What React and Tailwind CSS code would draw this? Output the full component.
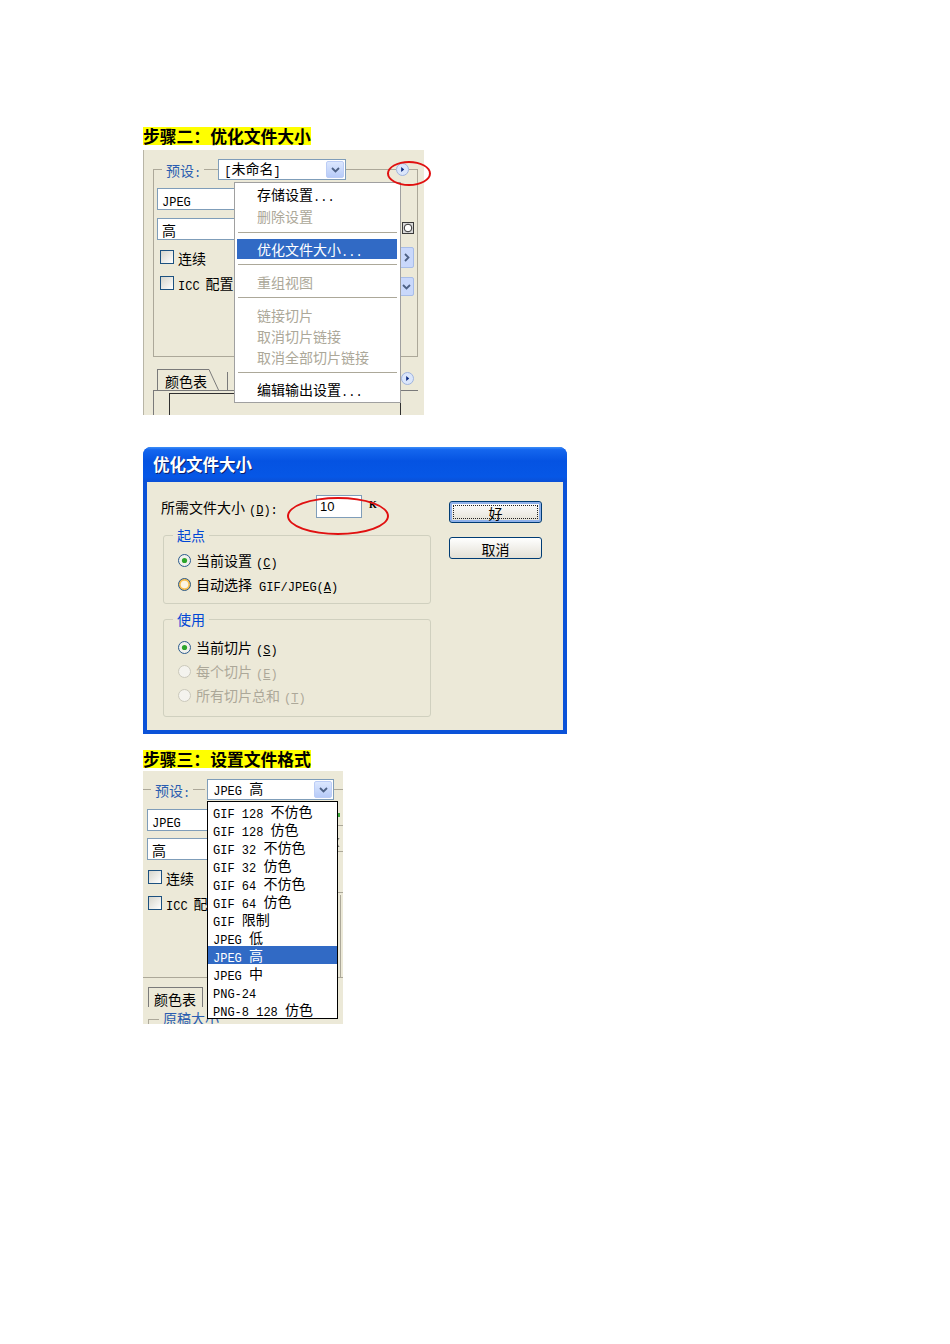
import React from "react";

const MONO = "relative top-[1px] font-['Liberation_Mono','Noto_Sans_CJK_SC',monospace] text-[12px]";
const CJK = "font-['Noto_Sans_CJK_SC',sans-serif] text-[14px]";

function T({ s }) {
  const parts = s.match(/[\x00-\x7f]+|[^\x00-\x7f]+/g) || [];
  return (
    <>
      {parts.map((p, i) =>
        /^[\x00-\x7f]+$/.test(p) ? (
          <span key={i} className={MONO}>
            {p}
          </span>
        ) : (
          <span key={i} className={CJK}>
            {p}
          </span>
        )
      )}
    </>
  );
}

function U({ k, post = ")" }) {
  return (
    <span className={MONO}>
      (<u>{k}</u>
      {post}
    </span>
  );
}

function Heading({ children }) {
  return (
    <div className="h-[18px] whitespace-nowrap bg-[#ffff00] font-['Noto_Sans_CJK_SC',sans-serif] text-[16.8px] font-bold leading-[18px] text-black">
      {children}
    </div>
  );
}

function Chevron() {
  return (
    <svg width="9" height="6" viewBox="0 0 9 6">
      <path d="M1 1L4.5 4.5L8 1" fill="none" stroke="#4d6185" strokeWidth="1.8" />
    </svg>
  );
}

function ChevronRight() {
  return (
    <svg width="6" height="9" viewBox="0 0 6 9">
      <path d="M1 1L4.5 4.5L1 8" fill="none" stroke="#4d6185" strokeWidth="1.8" />
    </svg>
  );
}

function Combo({ w, children }) {
  return (
    <div className={`flex h-[21px] shrink-0 items-center border border-[#7f9db9] bg-white ${w}`}>
      <div className="flex-1 whitespace-pre pl-[5px] leading-[19px]">{children}</div>
      <div className="mr-[1px] flex h-[17px] w-[18px] items-center justify-center rounded-[2px] border border-[#bccdf6] bg-gradient-to-b from-[#dce7fe] to-[#b7cbf8]">
        <Chevron />
      </div>
    </div>
  );
}

function MenuCircle() {
  return (
    <svg width="13" height="13" viewBox="0 0 13 13" className="shrink-0">
      <circle cx="6.5" cy="6.5" r="6" fill="#dbe6fb" stroke="#9fb3dd" />
      <path d="M5.2 4L8.2 6.5L5.2 9Z" fill="#0b2a80" />
    </svg>
  );
}

function Check() {
  return <div className="h-[14px] w-[14px] shrink-0 border border-[#1c5180] bg-gradient-to-br from-[#d6d5cc] to-white" />;
}

function Radio({ kind }) {
  if (kind === "on")
    return (
      <svg width="13" height="13" viewBox="0 0 13 13" className="shrink-0">
        <circle cx="6.5" cy="6.5" r="6" fill="#f1f1ec" stroke="#2a5a8c" />
        <circle cx="6.5" cy="6.5" r="2.6" fill="#2ca52c" />
      </svg>
    );
  if (kind === "hover")
    return (
      <svg width="13" height="13" viewBox="0 0 13 13" className="shrink-0">
        <circle cx="6.5" cy="6.5" r="6" fill="#f9bf4f" stroke="#2a5a8c" />
        <circle cx="6.5" cy="6.5" r="3.8" fill="#fbf4e2" />
      </svg>
    );
  return (
    <svg width="13" height="13" viewBox="0 0 13 13" className="shrink-0">
      <circle cx="6.5" cy="6.5" r="6" fill="#f4f3ee" stroke="#cac8bb" />
    </svg>
  );
}

function Field({ w, children }) {
  return (
    <div className={`flex h-[22px] shrink-0 items-center whitespace-pre border border-[#7f9db9] bg-white pl-[4px] leading-none ${w}`}>
      <span>{children}</span>
    </div>
  );
}

function MenuItem({ children, dis, hl }) {
  const cls = hl
    ? "flex h-[20px] items-center whitespace-pre bg-[#316ac5] pl-[20px] leading-none text-white"
    : dis
    ? "flex h-[21px] items-center whitespace-pre pl-[20px] leading-none text-[#aca899]"
    : "flex h-[21px] items-center whitespace-pre pl-[20px] leading-none text-black";
  return (
    <div className={cls}>
      <span>{children}</span>
    </div>
  );
}

function Sep({ h }) {
  return (
    <div className={`flex items-center pl-[1px] ${h}`}>
      <div className="h-px flex-1 bg-[#aca899]" />
    </div>
  );
}

function Panel1() {
  return (
    <div className="relative">
      <div className="relative h-[265px] w-[281px] overflow-hidden border-l border-[#b8b5a6] bg-[#ece9d8] pl-[9px] pt-[9px]">
        <div className="w-[265px]">
          <div className="flex h-[21px] items-center">
            <div className="h-[11px] w-[9px] self-end border-l border-t border-[#aca899]" />
            <span className="whitespace-pre pl-[4px] pr-[3px] leading-none text-[#2a5db0]">
              <T s="预设:" />
            </span>
            <div className="h-px w-[14px] bg-[#aca899]" />
            <Combo w="w-[128px]">
              <T s="[未命名]" />
            </Combo>
            <div className="h-px flex-1 bg-[#aca899]" />
            <MenuCircle />
            <div className="h-[11px] w-[9px] self-end border-r border-t border-[#aca899]" />
          </div>
          <div className="flex h-[177px] justify-between border-x border-b border-[#aca899] pl-[3px] pr-[3px] pt-[8px]">
            <div className="flex flex-col">
              <Field w="w-[90px]">
                <T s="JPEG" />
              </Field>
              <div className="mt-[8px]">
                <Field w="w-[90px]">
                  <T s="高" />
                </Field>
              </div>
              <div className="mt-[9px] flex h-[16px] items-center gap-[4px] whitespace-pre pl-[3px] leading-none">
                <Check />
                <span>
                  <T s="连续" />
                </span>
              </div>
              <div className="mt-[10px] flex h-[16px] items-center gap-[4px] whitespace-pre pl-[3px] leading-none">
                <Check />
                <span>
                  <T s="ICC" />
                  <span className="inline-block w-[6px]" />
                  <T s="配置" />
                </span>
              </div>
            </div>
            <div className="flex flex-col items-end">
              <svg width="12" height="12" viewBox="0 0 12 12" className="mt-[34px]">
                <rect x="0" y="0" width="12" height="12" fill="#3a3a3a" />
                <rect x="1" y="1" width="10" height="10" fill="#d8d8d8" />
                <circle cx="6" cy="6" r="3.8" fill="#fff" stroke="#333" strokeWidth="1" />
              </svg>
              <div className="mt-[13px] flex h-[21px] w-[22px] items-center justify-end rounded-[2px] border border-[#a8bde8] bg-[#c9d8fb] pr-[3px]">
                <ChevronRight />
              </div>
              <div className="mt-[9px] flex h-[19px] w-[22px] items-center justify-end rounded-[2px] border border-[#a8bde8] bg-[#c9d8fb] pr-[2px]">
                <Chevron />
              </div>
            </div>
          </div>
        </div>
        <div className="mt-[11px] w-[265px]">
          <div className="flex h-[22px] items-end">
            <div className="ml-[4px] flex h-[21px] items-center whitespace-pre border-l border-t border-[#7a7a7a] pl-[7px] pr-[2px] leading-none">
              <span>
                <T s="颜色表" />
              </span>
            </div>
            <svg width="10" height="21" viewBox="0 0 10 21" className="shrink-0">
              <path d="M0 0.5L9.5 21" stroke="#7a7a7a" fill="none" />
            </svg>
            <div className="ml-[8px] h-[18px] border-l border-[#7a7a7a]" />
            <div className="flex-1" />
            <div className="mb-[5px] mr-[4px]">
              <MenuCircle />
            </div>
          </div>
          <div className="h-[30px] border-l border-t border-[#7a7a7a] pl-[15px] pt-[2px]">
            <div className="h-full w-[232px] border border-[#303030]" />
          </div>
        </div>

        <div className="absolute left-[90px] top-[32px] w-[167px] border border-[#a0a0a0] bg-white pb-[3px] pl-[2px] pr-[3px]">
          <MenuItem>
            <T s="存储设置..." />
          </MenuItem>
          <MenuItem dis>
            <T s="删除设置" />
          </MenuItem>
          <Sep h="h-[14px]" />
          <MenuItem hl>
            <T s="优化文件大小..." />
          </MenuItem>
          <Sep h="h-[11px]" />
          <MenuItem dis>
            <T s="重组视图" />
          </MenuItem>
          <Sep h="h-[12px]" />
          <MenuItem dis>
            <T s="链接切片" />
          </MenuItem>
          <MenuItem dis>
            <T s="取消切片链接" />
          </MenuItem>
          <MenuItem dis>
            <T s="取消全部切片链接" />
          </MenuItem>
          <Sep h="h-[12px]" />
          <MenuItem>
            <T s="编辑输出设置..." />
          </MenuItem>
        </div>
      </div>
      <div className="absolute left-[244px] top-[11px] h-[25px] w-[44px] rounded-[50%] border-2 border-[#e01010]" />
    </div>
  );
}

function XPButton({ children, def }) {
  if (def)
    return (
      <div className="flex h-[22px] w-[93px] rounded-[3px] border border-[#003c74] bg-gradient-to-b from-white to-[#e3e0d5] p-[1px] shadow-[inset_0_0_0_2px_#8fb1ea]">
        <div className="m-[2px] flex flex-1 items-center justify-center border border-dotted border-[#222] leading-none">
          <span>
            <T s="好" />
          </span>
        </div>
      </div>
    );
  return (
    <div className="flex h-[22px] w-[93px] items-center justify-center rounded-[3px] border border-[#003c74] bg-gradient-to-b from-white to-[#e3e0d5] leading-none">
      <span>{children}</span>
    </div>
  );
}

function RadioRow({ kind, children, h }) {
  return (
    <div className={`flex items-center gap-[5px] whitespace-pre leading-none ${h} ${kind === "off" ? "text-[#aca899]" : "text-black"}`}>
      <Radio kind={kind} />
      <span>{children}</span>
    </div>
  );
}

function Dialog() {
  return (
    <div className="relative">
      <div className="flex h-[287px] w-[424px] flex-col overflow-hidden rounded-t-[8px] bg-[#0b52d8]">
        <div className="flex h-[35px] shrink-0 items-center bg-[linear-gradient(to_bottom,#3c8ef8_0%,#1466ee_8%,#0553e2_40%,#0657e6_85%,#0a4fd6_100%)] pl-[10px]">
          <span className="font-['Noto_Sans_CJK_SC',sans-serif] text-[16.5px] font-bold leading-none text-white [text-shadow:1px_1px_0_#0a1f6e]">
            优化文件大小
          </span>
        </div>
        <div className="mx-[4px] mb-[4px] flex flex-1 bg-[#ece9d8]">
          <div className="ml-[16px] flex w-[268px] flex-col">
            <div className="-ml-[2px] mt-[13px] flex h-[23px] items-center">
              <span className="w-[155px] whitespace-pre leading-none">
                <T s="所需文件大小" />
                <span className="inline-block w-[4px]" />
                <U k="D" post="):" />
              </span>
              <div className="flex h-[23px] w-[46px] items-center border border-[#7f9db9] bg-white pl-[3px] font-['Liberation_Sans',sans-serif] text-[13px] leading-none">
                10
              </div>
              <span className="ml-[7px] self-start pt-[5px] font-['Liberation_Serif',serif] text-[10px] font-bold leading-none">K</span>
            </div>
            <fieldset className="mt-[8px] rounded-[3px] border border-[#d0d0bf]">
              <legend className="ml-[9px] px-[4px] font-['Noto_Sans_CJK_SC',sans-serif] text-[14px] leading-[18px] text-[#0046d5]">起点</legend>
              <div className="pb-[7px] pl-[14px] pt-[4px]">
                <RadioRow kind="on" h="h-[24px]">
                  <T s="当前设置" />
                  <span className="inline-block w-[4px]" />
                  <U k="C" />
                </RadioRow>
                <RadioRow kind="hover" h="h-[24px]">
                  <T s="自动选择" />
                  <span className="inline-block w-[7px]" />
                  <T s="GIF/JPEG" />
                  <U k="A" />
                </RadioRow>
              </div>
            </fieldset>
            <fieldset className="mt-[6px] rounded-[3px] border border-[#d0d0bf]">
              <legend className="ml-[9px] px-[4px] font-['Noto_Sans_CJK_SC',sans-serif] text-[14px] leading-[18px] text-[#0046d5]">使用</legend>
              <div className="pb-[9px] pl-[14px] pt-[7px]">
                <RadioRow kind="on" h="h-[24px]">
                  <T s="当前切片" />
                  <span className="inline-block w-[4px]" />
                  <U k="S" />
                </RadioRow>
                <RadioRow kind="off" h="h-[24px]">
                  <T s="每个切片" />
                  <span className="inline-block w-[4px]" />
                  <U k="E" />
                </RadioRow>
                <RadioRow kind="off" h="h-[24px]">
                  <T s="所有切片总和" />
                  <span className="inline-block w-[4px]" />
                  <U k="T" />
                </RadioRow>
              </div>
            </fieldset>
          </div>
          <div className="ml-[18px] flex flex-col pt-[19px]">
            <XPButton def />
            <div className="mt-[14px]">
              <XPButton>
                <T s="取消" />
              </XPButton>
            </div>
          </div>
        </div>
      </div>
      <div className="absolute left-[144px] top-[50px] h-[38px] w-[102px] rounded-[50%] border-2 border-[#e01010]" />
    </div>
  );
}

const LIST = [
  "GIF 128 不仿色",
  "GIF 128 仿色",
  "GIF 32 不仿色",
  "GIF 32 仿色",
  "GIF 64 不仿色",
  "GIF 64 仿色",
  "GIF 限制",
  "JPEG 低",
  "JPEG 高",
  "JPEG 中",
  "PNG-24",
  "PNG-8 128 仿色",
];

function Panel3() {
  return (
    <div className="relative h-[253px] w-[200px] overflow-hidden bg-[#ece9d8] pt-[8px]">
      <div className="flex h-[21px] items-center">
        <div className="h-px w-[8px] bg-[#aca899]" />
        <span className="whitespace-pre pl-[4px] pr-[3px] leading-none text-[#2a5db0]">
          <T s="预设:" />
        </span>
        <div className="h-px w-[12px] bg-[#aca899]" />
        <div className="w-[2px]" />
        <Combo w="w-[127px]">
          <T s="JPEG 高" />
        </Combo>
        <div className="h-px flex-1 bg-[#aca899]" />
      </div>
      <div className="flex h-[178px] border-b border-[#aca899] pl-[4px] pt-[9px]">
        <div className="flex flex-col">
          <Field w="w-[70px]">
            <T s="JPEG" />
          </Field>
          <div className="mt-[7px]">
            <Field w="w-[70px]">
              <T s="高" />
            </Field>
          </div>
          <div className="mt-[9px] flex h-[16px] items-center gap-[4px] whitespace-pre pl-[1px] leading-none">
            <Check />
            <span>
              <T s="连续" />
            </span>
          </div>
          <div className="mt-[10px] flex h-[16px] items-center gap-[4px] whitespace-pre pl-[1px] leading-none">
            <Check />
            <span>
              <T s="ICC" />
              <span className="inline-block w-[6px]" />
              <T s="配置" />
            </span>
          </div>
        </div>
        <div className="ml-auto flex w-[6px] flex-col">
          <div className="mt-[4px] h-[4px] w-[3px] bg-[#3aa63a]" />
          <div className="mt-[8px] h-px bg-[#aca899]" />
          <div className="mt-[12px] h-[9px] w-[3px] rounded-l-full border-l border-black" />
          <div className="mt-[4px] h-px bg-[#aca899]" />
          <div className="mt-[40px] h-px bg-[#aca899]" />
          <div className="ml-[3px] mt-[2px] flex-1 border-l border-[#aca899]" />
        </div>
      </div>
      <div className="mt-[9px] flex h-[20px] items-end">
        <div className="ml-[5px] flex h-[20px] items-center whitespace-pre border-l border-r border-t border-[#7a7a7a] pl-[5px] pr-[6px] leading-none">
          <span>
            <T s="颜色表" />
          </span>
        </div>
      </div>
      <div className="flex h-[20px] items-center">
        <div className="ml-[5px] h-[8px] w-[11px] self-end border-l border-t border-[#aca899]" />
        <span className="whitespace-pre pl-[4px] leading-none text-[#2a5db0]">
          <T s="原稿大小" />
        </span>
      </div>

      <div className="absolute left-[64px] top-[30px] w-[131px] border border-black bg-white">
        {LIST.map((s, i) => (
          <div
            key={s}
            className={
              i === 8
                ? "flex h-[18px] items-center whitespace-pre bg-[#316ac5] pl-[5px] leading-none text-white"
                : "flex h-[18px] items-center whitespace-pre pl-[5px] leading-none text-black"
            }
          >
            <span>
              <T s={s} />
            </span>
          </div>
        ))}
      </div>
    </div>
  );
}

export default function App() {
  return (
    <div className="min-h-[1344px] w-[950px] bg-white font-['Noto_Sans_CJK_SC',sans-serif] text-black">
      <div className="flex flex-col items-start pl-[143px] pt-[127px]">
        <Heading>步骤二：优化文件大小</Heading>
        <div className="mt-[5px]">
          <Panel1 />
        </div>
        <div className="mt-[32px]">
          <Dialog />
        </div>
        <div className="mt-[16px]">
          <Heading>步骤三：设置文件格式</Heading>
        </div>
        <div className="mt-[3px]">
          <Panel3 />
        </div>
      </div>
    </div>
  );
}
